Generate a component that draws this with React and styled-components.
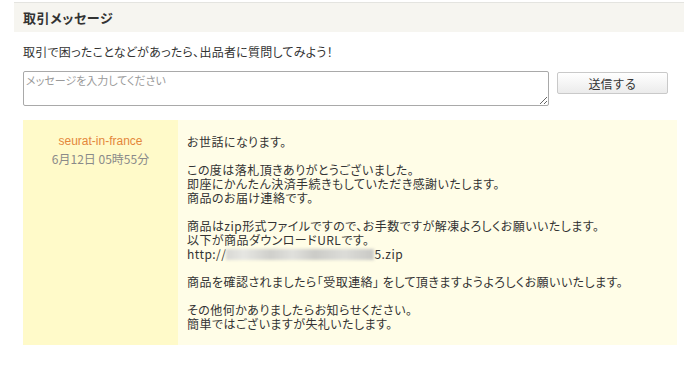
import React from 'react';
import styled, { createGlobalStyle } from 'styled-components';

const GlobalStyle = createGlobalStyle`
	body {
		margin: 0;
		background: #fff;
		font-family: 'Noto Sans CJK JP', 'Liberation Sans', sans-serif;
		color: #333;
	}
`;

const Section = styled.section`
	padding: 2px 16px 0 14px;
	width: 670px;
`;

const Header = styled.h2`
	margin: 0;
	height: 29px;
	display: flex;
	align-items: center;
	padding-left: 9px;
	border-top: 1px solid #e4e4e0;
	background: #f6f5f0;
	font-size: 13px;
	font-weight: bold;
	letter-spacing: 0.6px;
	color: #333;
	font-feature-settings: 'palt';
`;

const Body = styled.div`
	padding: 0 9px;
`;

const Intro = styled.p`
	margin: 11px 0 10px;
	font-size: 12px;
	line-height: 18px;
	letter-spacing: 0.25px;
	font-feature-settings: 'palt';
`;

const FormRow = styled.div`
	display: flex;
	align-items: flex-start;
	gap: 8px;
`;

const TextArea = styled.textarea`
	display: block;
	box-sizing: border-box;
	width: 526px;
	height: 35px;
	margin: 0;
	padding: 1px 2px;
	border: 1px solid #a9a9a9;
	border-radius: 2px;
	font-family: 'Noto Sans CJK JP', sans-serif;
	font-size: 11px;
	line-height: 14px;
	font-feature-settings: 'palt';
	resize: vertical;
	&::placeholder {
		color: #9a9a9a;
	}
`;

const SendButton = styled.button`
	box-sizing: border-box;
	width: 111px;
	height: 22px;
	margin-top: 1px;
	border: 1px solid #c9c9c9;
	border-radius: 2px;
	background: linear-gradient(#ffffff, #ebebeb);
	font-family: 'Noto Sans CJK JP', sans-serif;
	font-size: 12px;
	color: #333;
	padding: 0;
	cursor: pointer;
`;

const Message = styled.div`
	display: flex;
	width: 654px;
	margin-top: 14px;
`;

const Meta = styled.div`
	width: 155px;
	flex-shrink: 0;
	box-sizing: border-box;
	padding-top: 12px;
	background: #fffac9;
	text-align: center;
	font-size: 12px;
	line-height: 18px;
`;

const Sender = styled.div`
	color: #e4873b;
	font-family: 'Liberation Sans', sans-serif;
`;

const Date = styled.div`
	color: #8a8a8a;
`;

const Text = styled.div`
	flex: 1;
	padding: 15px 9px 14px;
	background: #fffde7;
	font-size: 12px;
	line-height: 14px;
	letter-spacing: 0.45px;
	font-feature-settings: 'palt';
	p {
		margin: 0 0 14px;
	}
	p:last-child {
		margin-bottom: 0;
	}
`;

const Blurred = styled.span`
	display: inline-block;
	width: 148px;
	height: 11px;
	vertical-align: -1px;
	background: linear-gradient(
		90deg,
		#d8d8d4 0%,
		#e6e6e2 12%,
		#cfcfcb 30%,
		#e0e0dc 45%,
		#cbcbc7 60%,
		#dcdcd8 80%,
		#c8c8c4 100%
	);
	filter: blur(1.5px);
`;

const paragraphs = [
	['お世話になります。'],
	[
		'この度は落札頂きありがとうございました。',
		'即座にかんたん決済手続きもしていただき感謝いたします。',
		'商品のお届け連絡です。',
	],
];

export default function App() {
	return (
		<>
			<GlobalStyle />
			<Section>
				<Header>取引メッセージ</Header>
				<Body>
					<Intro>取引で困ったことなどがあったら、出品者に質問してみよう！</Intro>
					<FormRow>
						<TextArea placeholder='メッセージを入力してください' />
						<SendButton>送信する</SendButton>
					</FormRow>
					<Message>
						<Meta>
							<Sender>seurat-in-france</Sender>
							<Date>6月12日 05時55分</Date>
						</Meta>
						<Text>
							{paragraphs.map((lines, i) => (
								<p key={i}>
									{lines.map((line, j) => (
										<React.Fragment key={j}>
											{j > 0 && <br />}
											{line}
										</React.Fragment>
									))}
								</p>
							))}
							<p>
								商品はzip形式ファイルですので、お手数ですが解凍よろしくお願いいたします。
								<br />
								以下が商品ダウンロードURLです。
								<br />
								http://
								<Blurred />
								5.zip
							</p>
							<p>
								商品を確認されましたら「受取連絡」 をして頂きますようよろしくお願いいたします。
							</p>
							<p>
								その他何かありましたらお知らせください。
								<br />
								簡単ではございますが失礼いたします。
							</p>
						</Text>
					</Message>
				</Body>
			</Section>
		</>
	);
}
